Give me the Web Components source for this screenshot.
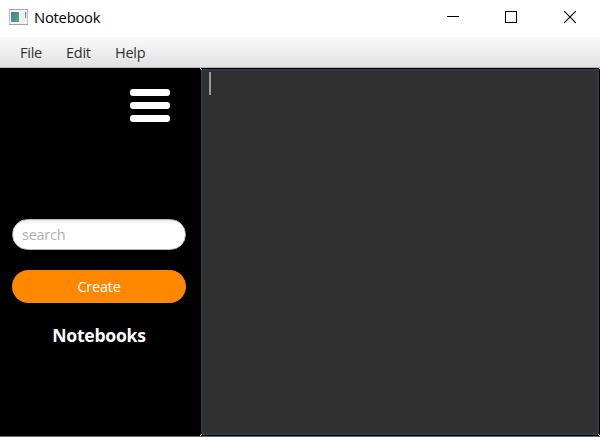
<!DOCTYPE html>
<html lang="en">
<head>
<meta charset="utf-8">
<title>Notebook</title>
<style>
html, body { margin: 0; height: 100%; overflow: hidden; background: #fff; }
body { font-family: "Open Sans", "Noto Sans", sans-serif; font-size: 14.5px; letter-spacing: -.25px; }
</style>
</head>
<body>
<notebook-window>
  <title-bar slot="title">Notebook</title-bar>
  <menu-bar slot="menu">
    <menu-entry style="--w:46px">File</menu-entry>
    <menu-entry style="--w:49px">Edit</menu-entry>
    <menu-entry style="--w:56px">Help</menu-entry>
  </menu-bar>
  <side-panel slot="side">
    <menu-toggle></menu-toggle>
    <search-field>search</search-field>
    <pill-button>Create</pill-button>
    <section-title>Notebooks</section-title>
  </side-panel>
  <note-editor slot="editor"></note-editor>
</notebook-window>
<script>
function define(name, html) {
  const template = document.createElement('template');
  template.innerHTML = html;
  customElements.define(name, class extends HTMLElement {
    constructor() {
      super();
      this.attachShadow({ mode: 'open' }).append(template.content.cloneNode(true));
    }
  });
}

define('notebook-window', `
<style>
:host { display: grid; width: 600px; height: 437px; grid-template-rows: 37px 31px 368px 1px; box-sizing: border-box; }
main { display: grid; grid-template-columns: 200px 400px; background: #000; }
footer { background: #6b6868; }
</style>
<slot name="title"></slot><slot name="menu"></slot>
<main><slot name="side"></slot><slot name="editor"></slot></main><footer></footer>`);

define('title-bar', `
<style>
:host { display: flex; align-items: center; height: 37px; background: #fff; color: #000; font-size: 14.8px; }
svg { display: block; flex: none; }
.app { margin: 0 6px 0 9px; }
.name { flex: 1; line-height: 20px; padding-bottom: 3px; white-space: nowrap; }
</style>
<svg class="app" width="19" height="37" viewBox="0 0 19 37">
  <defs>
    <linearGradient id="g" x1="0" y1="0" x2="1" y2="1"><stop offset="0" stop-color="#4a7bab"/><stop offset="1" stop-color="#58aa68"/></linearGradient>
    <linearGradient id="b" x1="0" y1="0" x2="0" y2="1"><stop offset="0" stop-color="#5685b4"/><stop offset="1" stop-color="#5cae72"/></linearGradient>
  </defs>
  <rect x=".5" y="9.5" width="18" height="15" fill="#f5f5f7" stroke="#bdbdc2"/>
  <path d="M0 9.5h19M0 24.5h19" stroke="#a0a1a8"/>
  <rect x="2" y="12" width="8" height="10" fill="url(#g)"/>
  <rect x="11.5" y="12" width="4" height="10" fill="#eceef1"/>
  <rect x="16" y="12" width="1.2" height="6" fill="url(#b)"/>
</svg>
<span class="name"><slot></slot></span>
<svg width="153" height="37" viewBox="0 0 153 37" fill="none" stroke="#000">
  <path d="M0 16.5h12" shape-rendering="crispEdges"/>
  <rect x="58.5" y="11.5" width="11" height="11" shape-rendering="crispEdges"/>
  <path d="M117.2 11.2l11.6 11.6M128.8 11.2l-11.6 11.6" stroke-width="1.1"/>
</svg>`);

define('menu-bar', `
<style>
:host { display: flex; height: 31px; box-sizing: border-box; padding-left: 20px; background: linear-gradient(#fafafa, #e2e2e2); border-bottom: 1px solid #b5b5b5; color: #333; }
</style><slot></slot>`);

define('menu-entry', `
<style>:host { display: block; width: var(--w); line-height: 31px; }</style><slot></slot>`);

define('side-panel', `
<style>:host { display: flex; flex-direction: column; width: 200px; height: 368px; box-sizing: border-box; padding: 21px 14px 0 12px; background: #000; }</style><slot></slot>`);

define('menu-toggle', `
<style>:host { display: block; align-self: flex-end; margin-right: 16px; height: 130px; } svg { display: block; }</style>
<svg width="40" height="34" viewBox="0 0 40 34" fill="#fff">
  <rect width="40" height="7" rx="3"/><rect y="13" width="40" height="7" rx="3"/><rect y="26" width="40" height="7" rx="3"/>
</svg>`);

define('search-field', `
<style>:host { display: block; height: 31px; box-sizing: border-box; border: 1px solid #b8b8b8; border-radius: 16px; padding-left: 9px; line-height: 29px; background: linear-gradient(#ececec, #fff 5px); color: #b0b0b0; }</style><slot></slot>`);

define('pill-button', `
<style>:host { display: block; height: 33px; margin-top: 20px; border-radius: 16.5px; line-height: 33px; text-align: center; background: #ff8800; color: #fff; }</style><slot></slot>`);

define('section-title', `
<style>:host { display: block; margin-top: 20px; line-height: 25px; text-align: center; font-size: 17.6px; font-weight: 700; color: #fff; }</style><slot></slot>`);

define('note-editor', `
<style>
:host { display: block; position: relative; height: 368px; box-sizing: border-box; padding: 1px; background: #000; }
.page { height: 366px; box-sizing: border-box; border: 2px solid #283f48; background: #303030; padding: 1px 0 0 6px; }
.caret { width: 2px; height: 23px; background: #989898; }
i { position: absolute; width: 1px; height: 1px; background: #ddd; }
</style>
<div class="page"><div class="caret"></div></div>
<i style="left:0;top:0"></i><i style="left:1px;top:1px"></i><i style="right:0;top:0"></i>
<i style="left:0;bottom:0"></i><i style="left:1px;bottom:1px"></i><i style="right:0;bottom:0"></i><i style="right:1px;bottom:1px"></i>`);
</script>
</body>
</html>
